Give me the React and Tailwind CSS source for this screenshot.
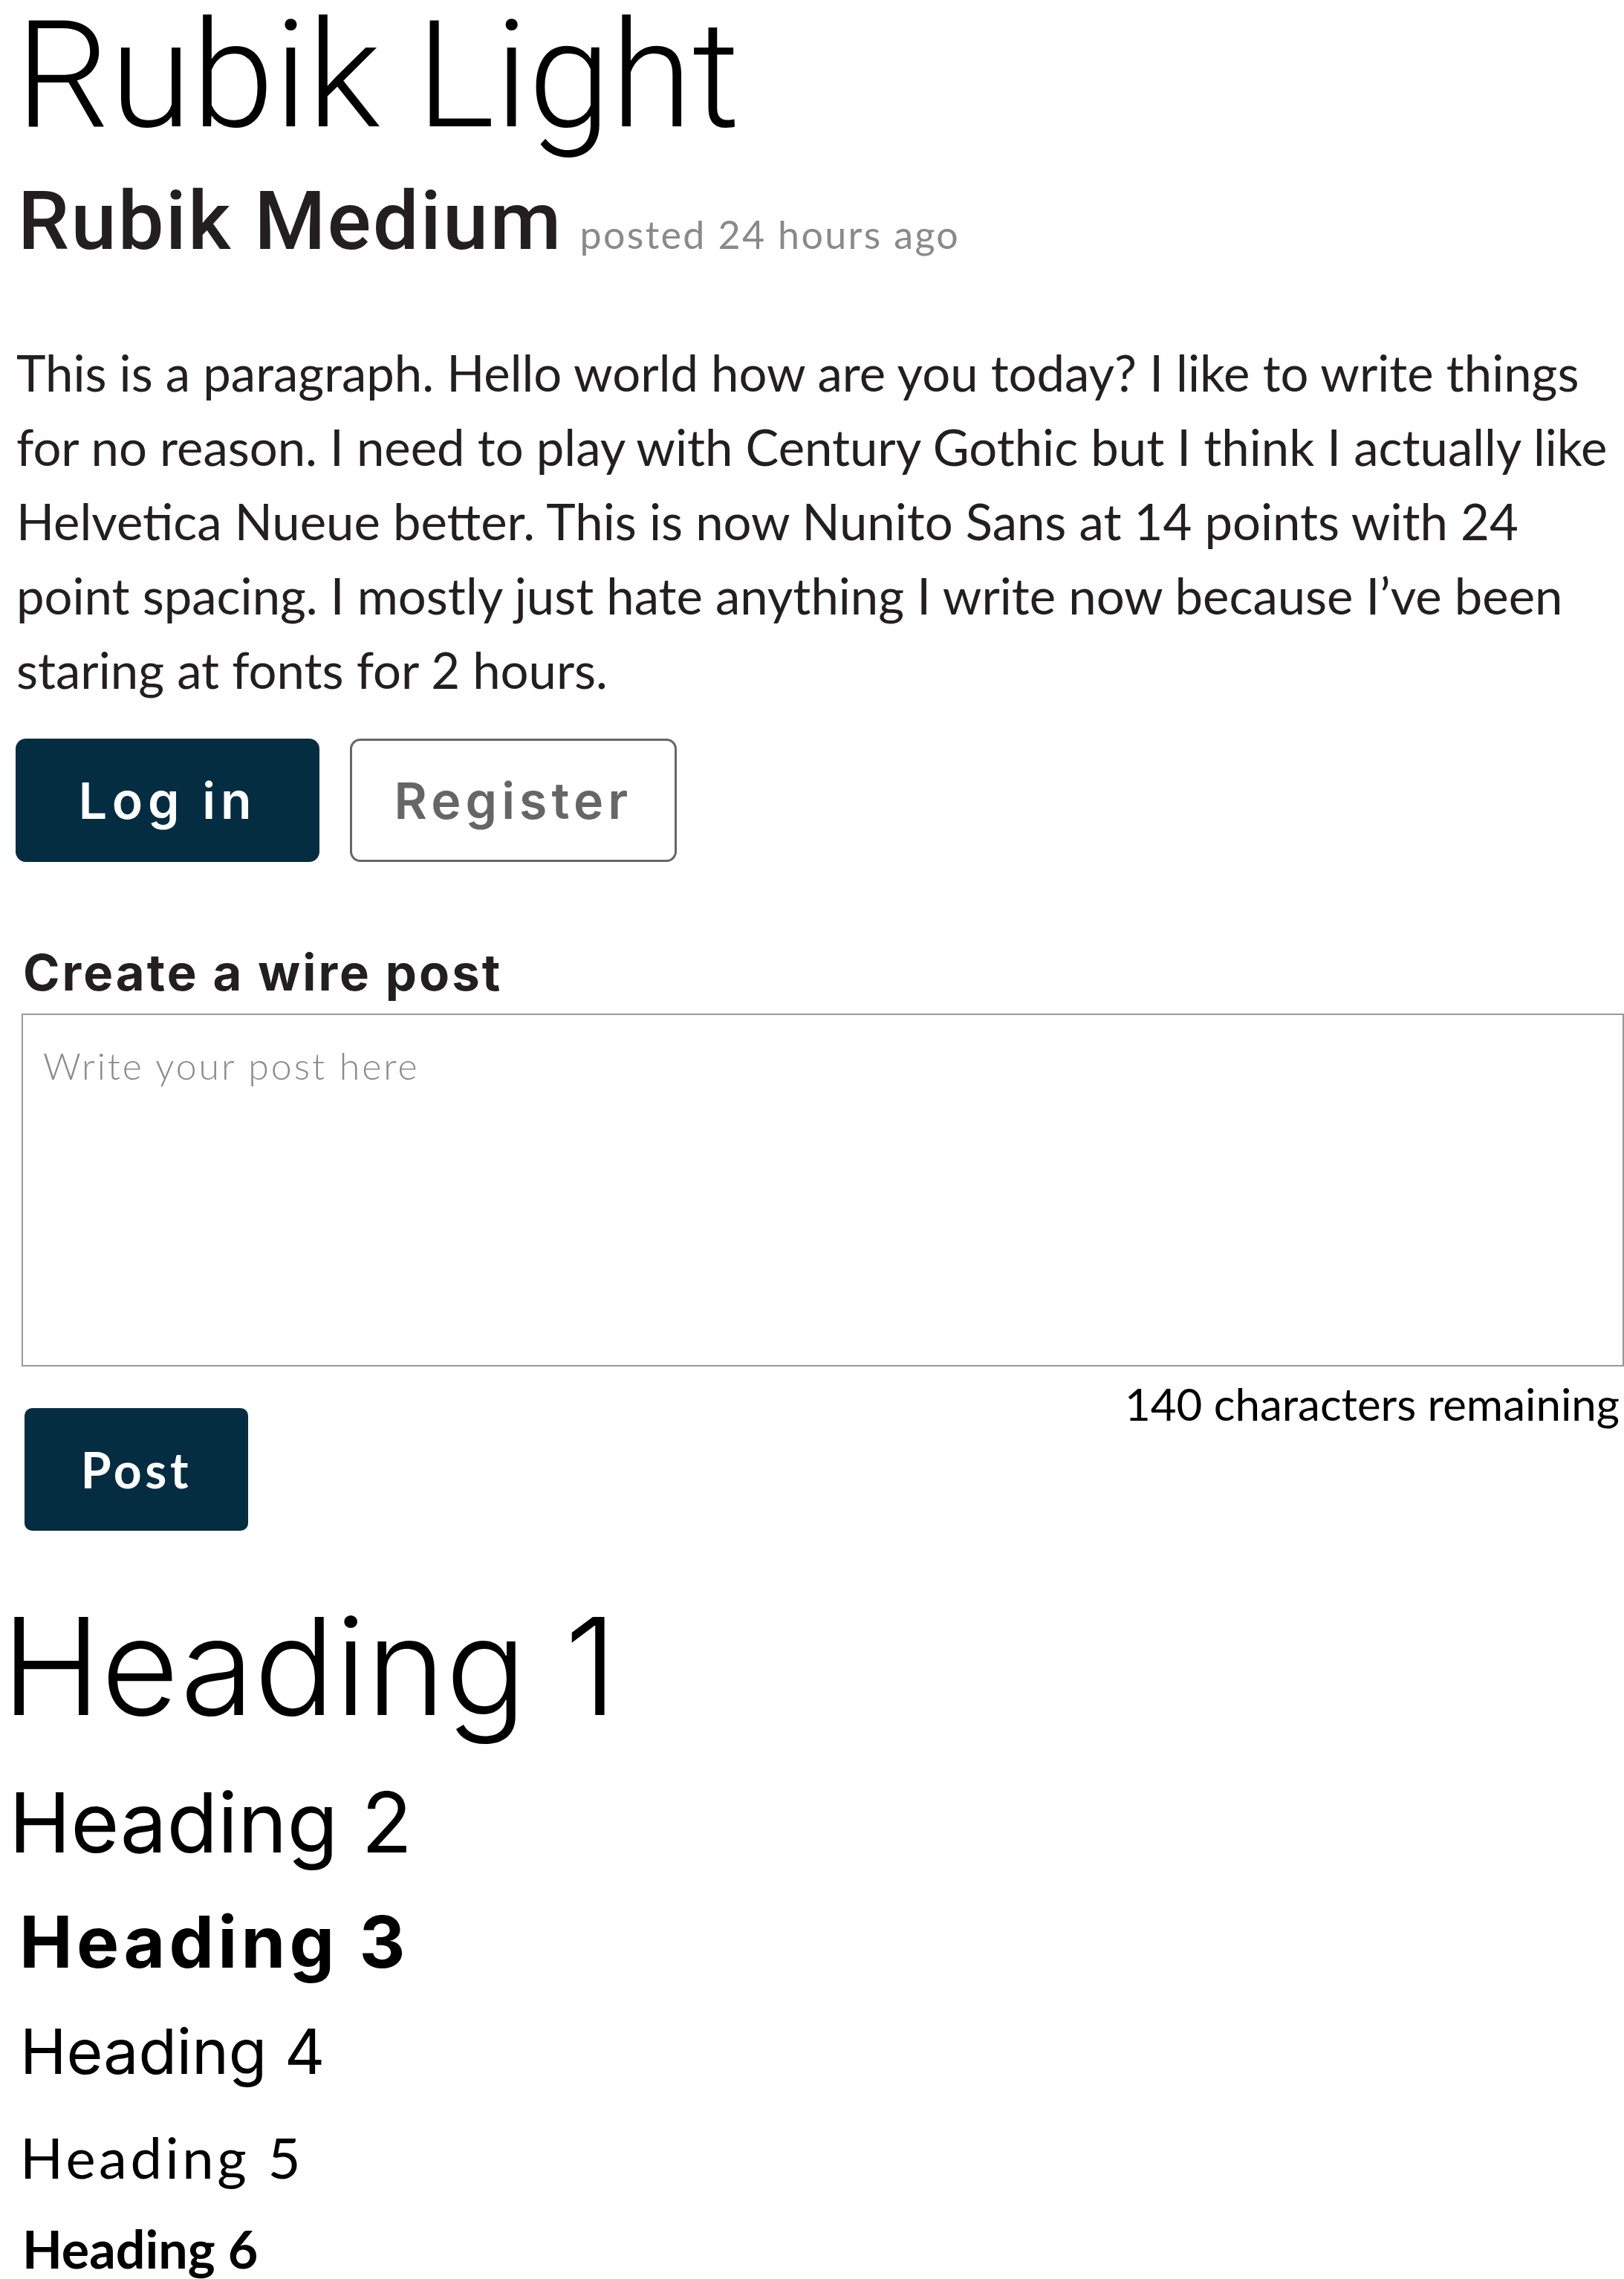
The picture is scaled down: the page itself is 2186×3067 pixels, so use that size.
import React, { useState } from 'react';

const MAX_CHARS = 140;

const App = () => {
  const [post, setPost] = useState('');
  const remaining = MAX_CHARS - post.length;

  return (
    <div className="w-[2186px] min-h-[3067px] overflow-hidden bg-white text-[#231f20]">
      {/* Type samples */}
      <div>
        <h1 className="pl-[21px] [font-family:Roboto,sans-serif] font-light text-[200px] leading-[204px] text-black">Rubik Light</h1>
        <div className="mt-[34px] pl-[24px] leading-[120px] whitespace-nowrap">
          <span className="[font-family:Roboto,sans-serif] font-medium text-[110px] tracking-[0.02em]">Rubik Medium</span>
          <span className="ml-[23px] [font-family:Lato,sans-serif] text-[52px] tracking-[0.045em] text-[#8a8a8a]">posted 24 hours ago</span>
        </div>
      </div>

      <p className="mt-[62px] pl-[22px] [font-family:Lato,sans-serif] text-[67px] leading-[100px]">
        This is a paragraph. Hello world how are you today? I like to write things for no reason. I need to play with Century Gothic but I think I actually like Helvetica Nueue better. This is now Nunito Sans at 14 points with 24 point spacing. I mostly just hate anything I write now because I’ve been staring at fonts for 2 hours.
      </p>

      {/* Auth buttons */}
      <div className="mt-[43px] pl-[21px] flex gap-[41px]">
        <button className="w-[409px] h-[166px] rounded-[14px] bg-[#042d42] text-white [font-family:Inter,sans-serif] font-semibold text-[68px] tracking-[0.1em]">
          Log in
        </button>
        <button className="w-[440px] h-[166px] rounded-[14px] border-[3px] border-[#666] text-[#666] [font-family:Inter,sans-serif] font-semibold text-[68px] tracking-[0.09em]">
          Register
        </button>
      </div>

      {/* Wire post form */}
      <div className="mt-[109px] pl-[29px]">
        <h2 className="pl-[2px] [font-family:Inter,sans-serif] font-bold text-[67px] leading-[80px] tracking-[0.045em]">Create a wire post</h2>
        <textarea
          value={post}
          onChange={(e) => setPost(e.target.value.slice(0, MAX_CHARS))}
          placeholder="Write your post here"
          className="mt-[15px] block w-[2157px] h-[475px] resize-none border-2 border-[#999] px-[27px] pt-[32px] [font-family:Lato,sans-serif] font-light text-[50px] leading-[72px] tracking-[0.06em] outline-none placeholder:text-[#8a8a8a]"
        />
        <div className="flex justify-between items-start pr-[6px]">
          <button className="mt-[56px] ml-[4px] w-[301px] h-[165px] rounded-[10px] bg-[#042d42] text-white [font-family:Lato,sans-serif] font-bold text-[66px] tracking-[0.07em]">
            Post
          </button>
          <span className="[font-family:Lato,sans-serif] text-[60px] leading-[100px] text-black">{remaining} characters remaining</span>
        </div>
      </div>

      {/* Heading scale */}
      <div className="mt-[73px] text-black">
        <h1 className="ml-[2px] [font-family:Inter,sans-serif] font-light text-[181px] leading-[220px]">Heading 1</h1>
        <h2 className="mt-[29px] ml-[12px] [font-family:Inter,sans-serif] font-normal text-[112px] leading-[140px]">Heading 2</h2>
        <h3 className="mt-[31px] ml-[26px] [font-family:Inter,sans-serif] font-bold text-[96px] leading-[120px] tracking-[0.055em]">Heading 3</h3>
        <h4 className="mt-[33px] ml-[27px] [font-family:Inter,sans-serif] font-normal text-[84px] leading-[110px]">Heading 4</h4>
        <h5 className="mt-[37px] ml-[27px] [font-family:Lato,sans-serif] font-normal text-[76px] leading-[100px] tracking-[0.06em]">Heading 5</h5>
        <h6 className="mt-[28px] ml-[30px] [font-family:Lato,sans-serif] font-bold text-[70px] leading-[90px]">Heading 6</h6>
      </div>
    </div>
  );
};

export default App;
